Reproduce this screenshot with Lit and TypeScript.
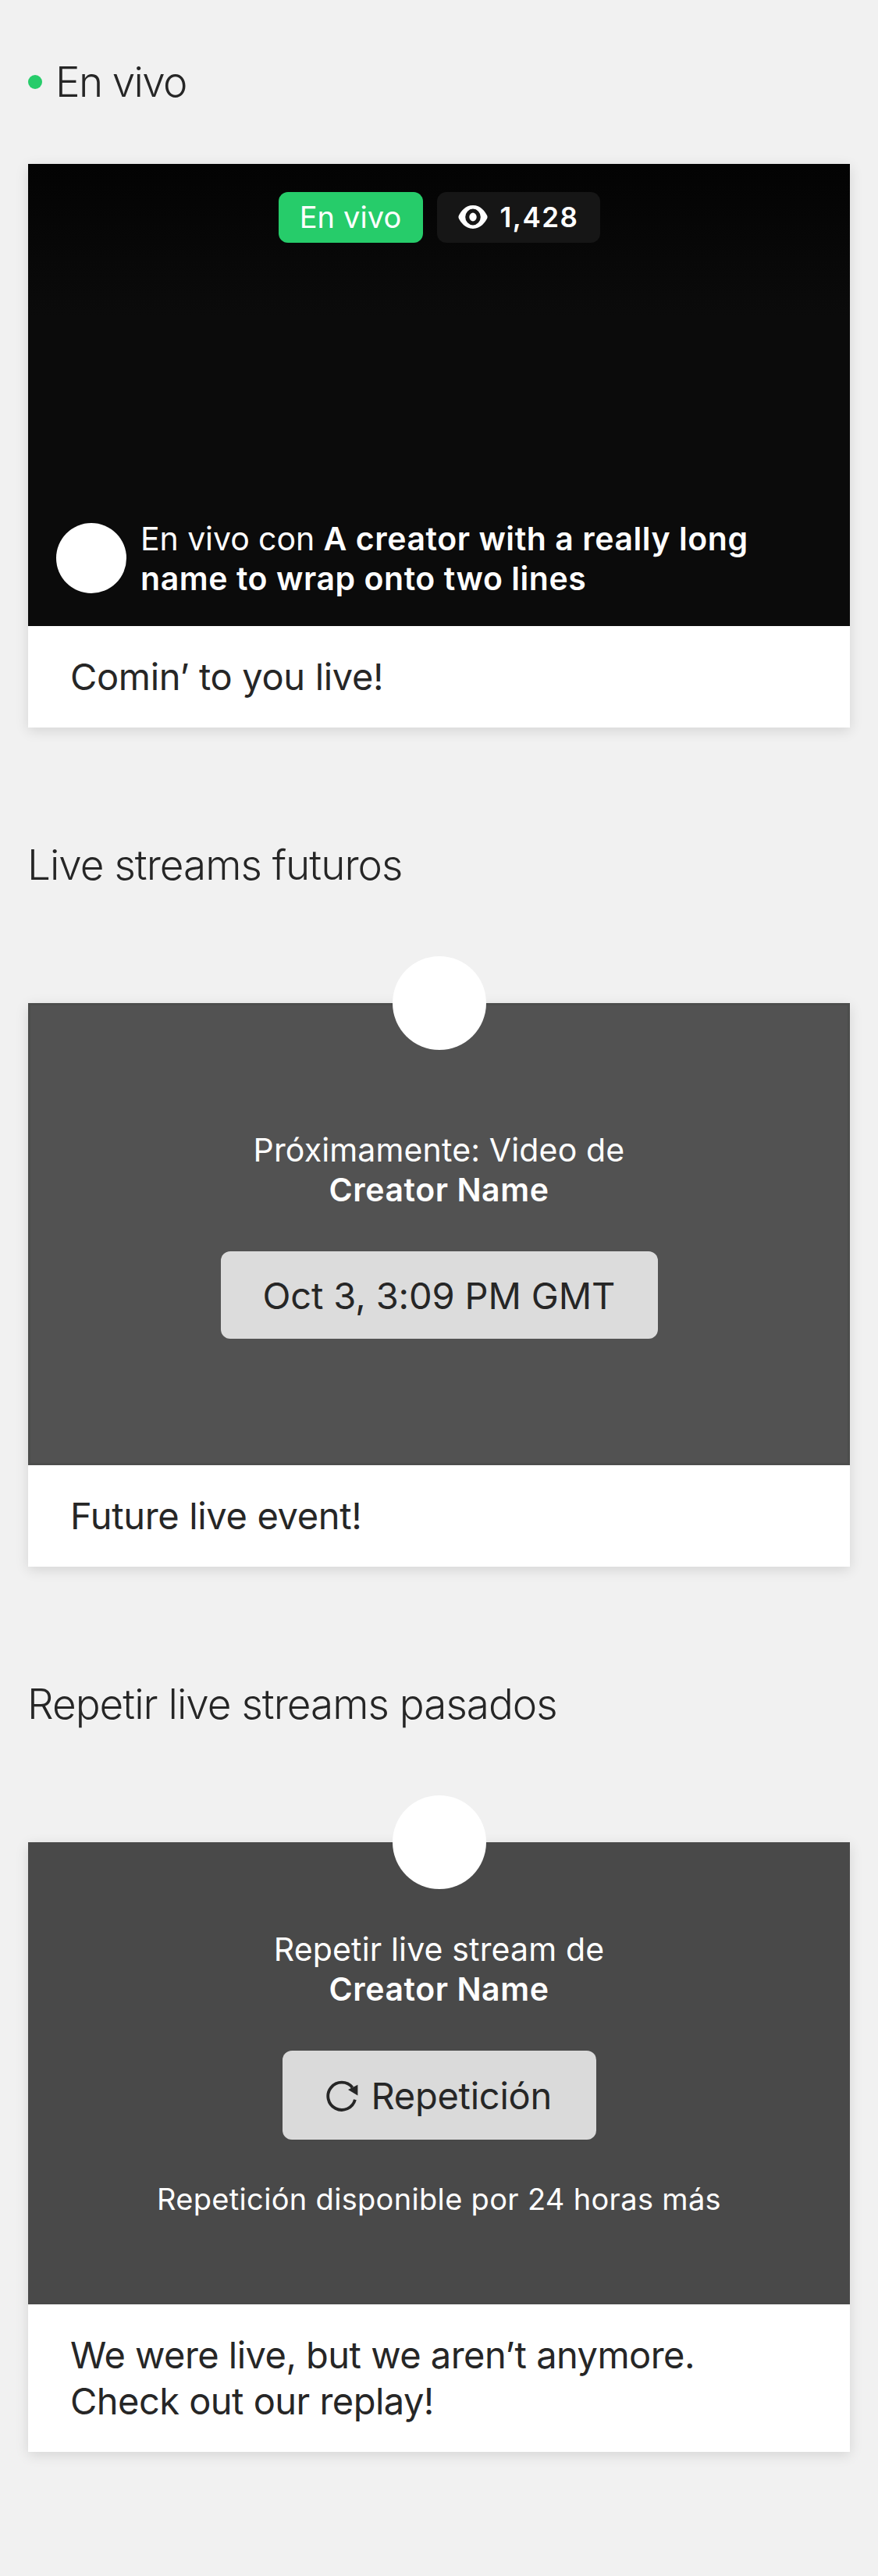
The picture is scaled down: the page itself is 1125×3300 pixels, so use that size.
import { LitElement, html, css, svg, nothing, type TemplateResult } from "lit";
import { customElement, property } from "lit/decorators.js";

const eyeIcon = svg`<svg class="eye" viewBox="0 0 38 30">
  <path fill="currentColor" fill-rule="evenodd" d="M19 0C29 0 34.6 8.2 37.2 13.2Q38 15 37.2 16.8C34.6 21.8 29 30 19 30S3.4 21.8.8 16.8Q0 15 .8 13.2C3.4 8.2 9 0 19 0ZM19 4.6A9.8 10.4 0 1 0 19 25.4A9.8 10.4 0 1 0 19 4.6ZM19 9.6A4.7 5.4 0 1 1 19 20.4A4.7 5.4 0 1 1 19 9.6Z"/>
</svg>`;

const replayIcon = svg`<svg class="replay" viewBox="0 0 42 40">
  <path fill="none" stroke="currentColor" stroke-width="3.8" d="M36.9 24.8A17.6 17.6 0 1 1 33.6 9.3"/>
  <path fill="currentColor" d="M40.4 5.8V19.6L28 12Z"/>
</svg>`;

@customElement("section-title")
class SectionTitle extends LitElement {
  @property({ type: Boolean }) live = false;

  static styles = css`
    :host { display: block; }
    .title {
      display: flex;
      align-items: center;
      margin: 0;
      font-size: 53px;
      font-weight: 300;
      line-height: 60px;
      letter-spacing: -0.98px;
      color: #262626;
    }
    .title.live { letter-spacing: -1.65px; }
    .dot {
      width: 18px;
      height: 18px;
      margin-right: 17px;
      border-radius: 50%;
      background: #26cc6a;
    }
    .label { margin-left: -1px; }
    .live .label { margin-left: 0; }
  `;

  render() {
    return html`<h2 class="title ${this.live ? "live" : ""}">
      ${this.live ? html`<span class="dot"></span>` : nothing}<span class="label"><slot></slot></span>
    </h2>`;
  }
}

@customElement("stream-card")
class StreamCard extends LitElement {
  @property() kind: "live" | "upcoming" | "replay" = "live";

  static styles = css`
    :host { display: block; }
    .card {
      position: relative;
      background: #fff;
      box-shadow: 0 4px 16px rgba(0, 0, 0, 0.12);
    }
    .media {
      box-sizing: border-box;
      height: 592px;
      display: flex;
      flex-direction: column;
      align-items: center;
      color: #fff;
      font-size: 41px;
      line-height: 51px;
      text-align: center;
    }
    .media.live {
      justify-content: space-between;
      padding: 36px;
      background: linear-gradient(#030303, #0b0b0b 33%, #0b0b0b);
    }
    .media.upcoming {
      padding-top: 163px;
      background: #525252;
      box-shadow: inset 0 0 0 3px #4c4d4c;
    }
    .media.replay {
      padding-top: 112px;
      background: #494949;
    }
    .portrait {
      position: absolute;
      top: -60px;
      left: calc(50% - 60px);
      width: 120px;
      height: 120px;
      border-radius: 50%;
      background: #fff;
    }
    .badges { display: flex; gap: 18px; }
    .badge {
      box-sizing: border-box;
      height: 65px;
      display: flex;
      align-items: center;
      justify-content: center;
      border-radius: 12px;
      line-height: 65px;
    }
    .badge.on {
      width: 185px;
      background: #26cc6a;
      font-size: 38px;
      letter-spacing: 0.1px;
    }
    .badge.viewers {
      width: 209px;
      gap: 16px;
      background: #161616;
      font-size: 35px;
      font-weight: 600;
      letter-spacing: 1.5px;
    }
    .eye { width: 38px; height: 30px; flex: none; margin-top: -2px; }
    .host {
      align-self: stretch;
      height: 90px;
      margin-bottom: 6px;
      display: flex;
      align-items: center;
      gap: 18px;
      text-align: left;
    }
    .avatar {
      flex: none;
      width: 90px;
      height: 90px;
      border-radius: 50%;
      background: #fff;
    }
    .with { letter-spacing: -0.08px; padding-top: 1px; }
    .intro { letter-spacing: 0.15px; }
    b { font-weight: 600; letter-spacing: 0.56px; }
    .chip {
      box-sizing: border-box;
      display: flex;
      align-items: center;
      width: 560px;
      height: 112px;
      margin-top: 53px;
      padding: 0 54px;
      border-radius: 12px;
      background: #dcdcdc;
      color: #262626;
      font-size: 47px;
      letter-spacing: -0.14px;
      white-space: nowrap;
    }
    .replay .chip {
      width: 402px;
      height: 114px;
      padding-left: 56px;
      gap: 16px;
      background: #dadada;
      letter-spacing: -0.26px;
    }
    svg.replay { width: 42px; height: 40px; flex: none; margin-top: 2px; }
    .note {
      margin-top: 51px;
      font-size: 38px;
      letter-spacing: 0.32px;
    }
    .caption {
      margin: 0;
      padding: 35px 54px 36px;
      font-size: 47px;
      line-height: 59px;
      letter-spacing: -0.53px;
      color: #262626;
    }
    .live + .caption, .upcoming + .caption { letter-spacing: -0.34px; }
  `;

  private renderMedia(): TemplateResult {
    if (this.kind === "live") {
      return html`
        <div class="badges">
          <span class="badge on">En vivo</span>
          <span class="badge viewers">${eyeIcon}<span>1,428</span></span>
        </div>
        <div class="host">
          <span class="avatar"></span>
          <div class="with">En vivo con <b>A creator with a really long<br />name to wrap onto two lines</b></div>
        </div>`;
    }
    if (this.kind === "upcoming") {
      return html`
        <div class="intro">Próximamente: Video de<br /><b>Creator Name</b></div>
        <div class="chip">Oct 3, 3:09 PM GMT</div>`;
    }
    return html`
      <div class="intro">Repetir live stream de<br /><b>Creator Name</b></div>
      <div class="chip">${replayIcon}<span>Repetición</span></div>
      <div class="note">Repetición disponible por 24 horas más</div>`;
  }

  render() {
    return html`<article class="card">
      <div class="media ${this.kind}">${this.renderMedia()}</div>
      <p class="caption"><slot></slot></p>
      ${this.kind === "live" ? nothing : html`<span class="portrait"></span>`}
    </article>`;
  }
}

@customElement("app-root")
class AppRoot extends LitElement {
  static styles = css`
    :host {
      display: block;
      box-sizing: border-box;
      min-height: 3300px;
      padding: 75px 36px 0;
      background: #f1f1f1;
      font-family: Inter, "Liberation Sans", sans-serif;
    }
    .card { margin-top: 147.5px; }
    .card.first { margin-top: 75px; }
    .heading { margin-top: 145.5px; }
  `;

  render() {
    return html`
      <section-title live>En vivo</section-title>
      <stream-card class="card first" kind="live">Comin’ to you live!</stream-card>
      <section-title class="heading">Live streams futuros</section-title>
      <stream-card class="card" kind="upcoming">Future live event!</stream-card>
      <section-title class="heading">Repetir live streams pasados</section-title>
      <stream-card class="card" kind="replay">We were live, but we aren’t anymore.<br />Check out our replay!</stream-card>
    `;
  }
}
